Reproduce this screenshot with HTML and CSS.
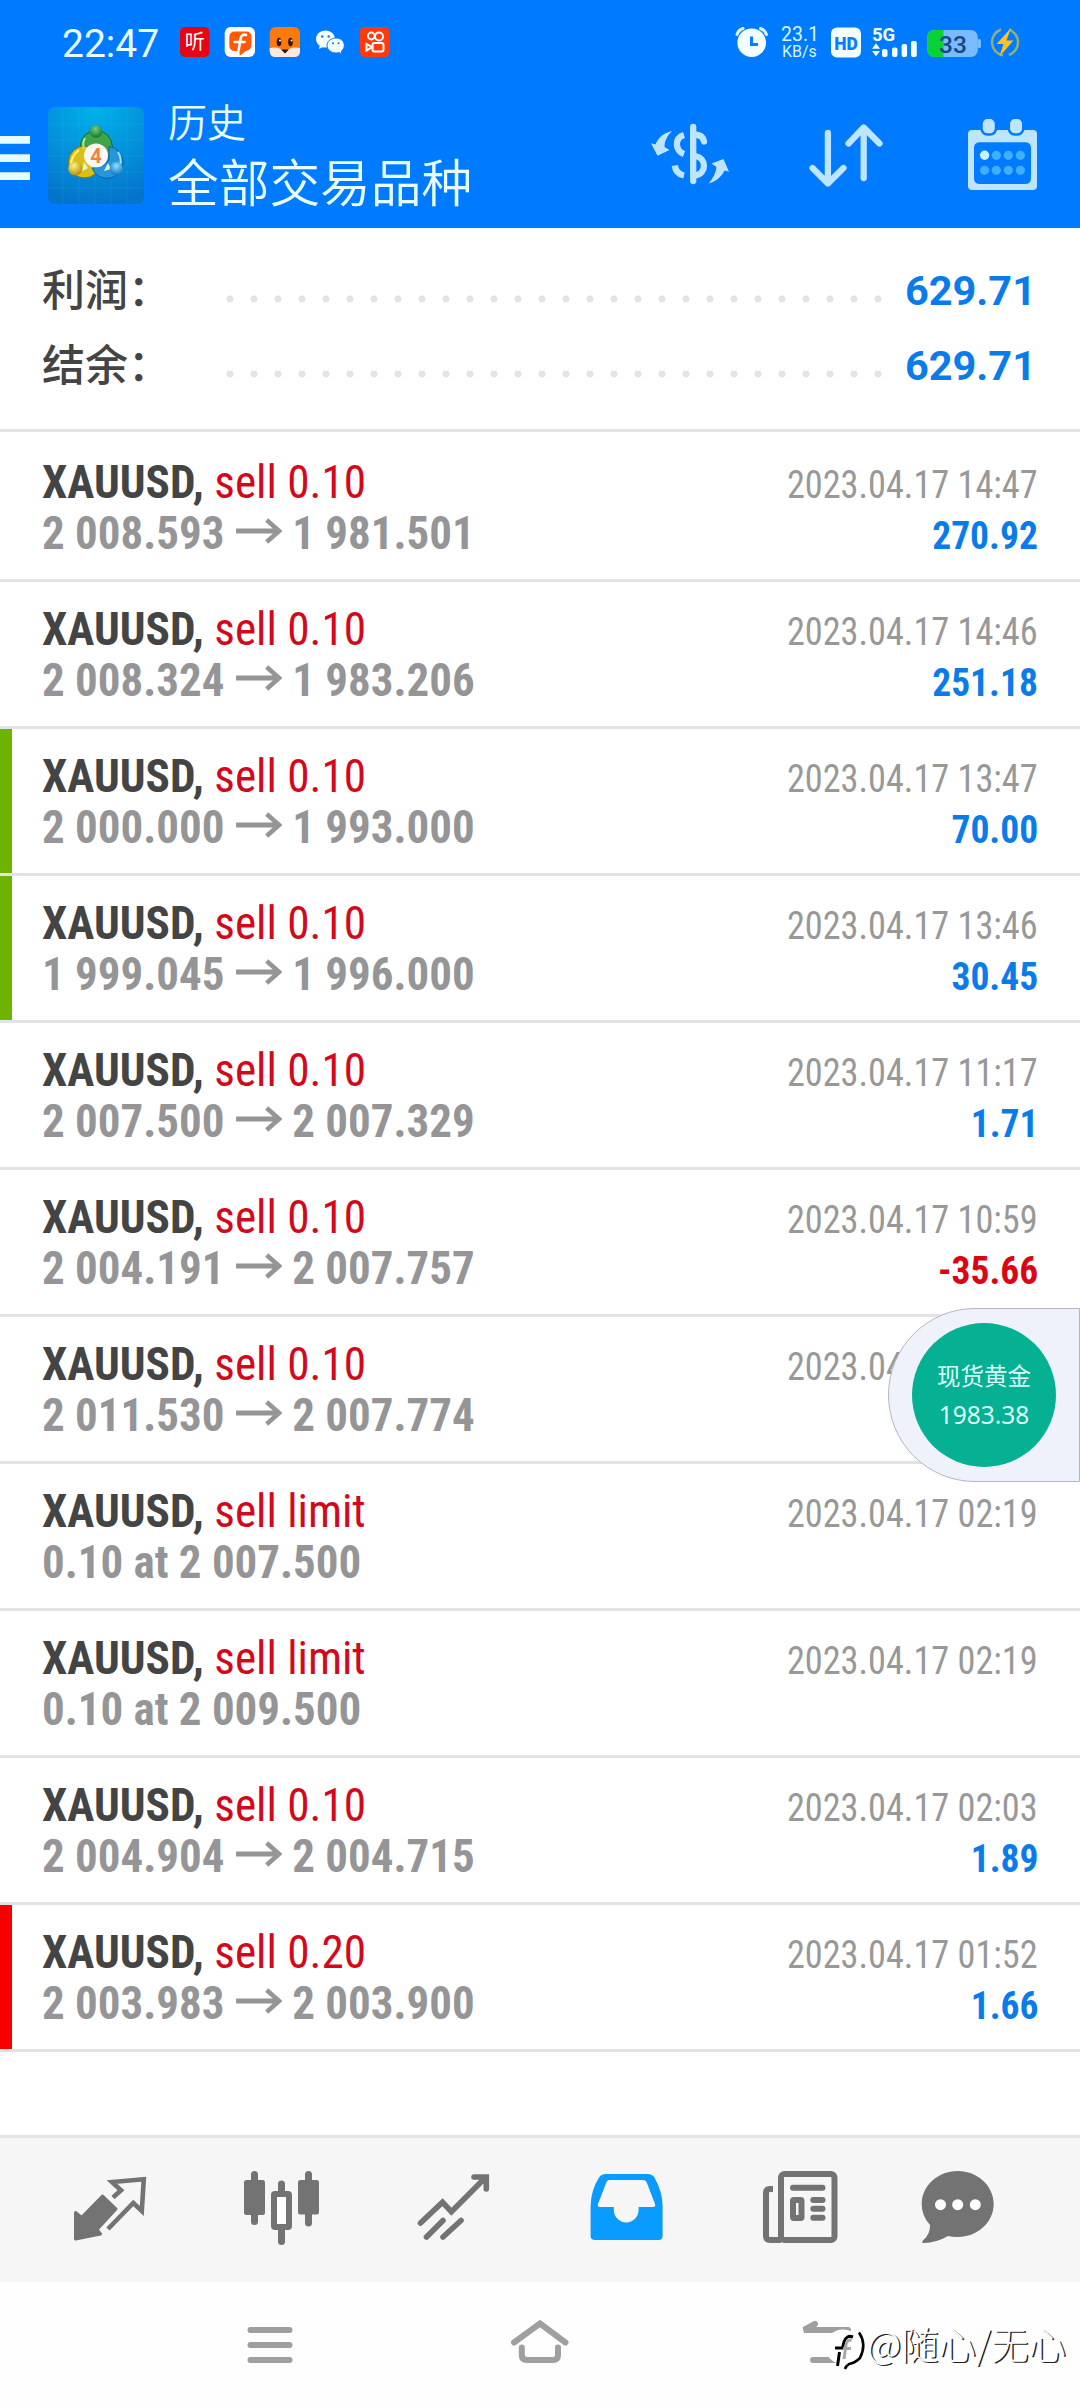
FILE: index.html
```html
<!DOCTYPE html>
<html lang="zh">
<head>
<meta charset="utf-8">
<title>历史</title>
<link rel="stylesheet" href="styles.css">
</head>
<body>
<svg width="0" height="0" class="defs"><symbol id="to" viewBox="0 0 48 26"><path d="M0 13H45M32 2L45 13L32 24" fill="none" stroke="#959597" stroke-width="4.800"/></symbol></svg>
<div class="screen">
  <header class="top">
    <div class="status">
      <span class="clock">22:47</span>
      <svg class="apps" width="230" height="84" viewBox="170 0 230 84">
        <rect x="180" y="27" width="29.5" height="30" rx="5" fill="#e60510"/>
        <text x="194.7" y="49" class="t-ting">听</text>
        <rect x="224.7" y="27" width="30.3" height="30" rx="6" fill="#fff"/>
        <path d="M235 31.500H246Q251.500 31.500 251.500 37V44Q251.500 50 246 51L240 55.500L239 51H235Q229.300 51 229.300 45V37Q229.300 31.500 235 31.500z" fill="#ff5a0a"/>
        <path d="M246 35Q241.500 33.500 240.500 39L238.500 51M234.500 42H244.500" fill="none" stroke="#fff" stroke-width="2.600" stroke-linecap="round"/>
        <rect x="269.700" y="27" width="30.300" height="30" rx="6" fill="#fa7a0c"/>
        <path d="M269.700 48Q280 46 284.800 53Q290 46 300 48V51Q300 57 294 57H275.700Q269.700 57 269.700 51z" fill="#ffe9df"/>
        <path d="M281 49.500H289L285 53.500z" fill="#2b1208"/>
        <ellipse cx="279" cy="42" rx="2.300" ry="4.300" fill="#3a1408"/><ellipse cx="290.500" cy="42" rx="2.300" ry="4.300" fill="#3a1408"/>
        <circle cx="280" cy="40.500" r="1" fill="#fff"/><circle cx="291.500" cy="40.500" r="1" fill="#fff"/>
        <path d="M325.500 30.500C320 30.500 316 34.300 316 39C316 41.800 317.400 44.200 319.700 45.700L319 49L322.500 47.200Q324 47.600 325.500 47.600C331 47.600 335 43.800 335 39S331 30.500 325.500 30.500z" fill="#f4fdff"/>
        <path d="M336 38C331 38 327 41.300 327 45.500S331 53 336 53Q337.500 53 339 52.600L341.800 54L341.200 51.300C343.100 49.800 344.300 47.800 344.300 45.500C344.300 41.300 341 38 336 38z" fill="#f4fdff" stroke="#0a7cff" stroke-width="1"/>
        <g fill="#0a7cff"><circle cx="322.200" cy="36.500" r="1.200"/><circle cx="328.700" cy="36.500" r="1.200"/><circle cx="333" cy="43.300" r="1"/><circle cx="338.500" cy="43.300" r="1"/></g>
        <rect x="359.700" y="27" width="30" height="30" rx="5" fill="#ff3a0c"/>
        <g fill="none" stroke="#fff" stroke-width="2"><circle cx="371.300" cy="36" r="3.400"/><circle cx="379" cy="36.500" r="4"/><rect x="372.500" y="43" width="11" height="8.500" rx="2"/><path d="M372 47.200L366.500 44V50.500z"/></g>
      </svg>
      <svg class="signals" width="300" height="84" viewBox="730 0 300 84">
        <circle cx="751.700" cy="42.700" r="14.300" fill="#f2ffff"/>
        <path d="M737 34.500Q738.500 30 743 28.500M766.400 34.500Q765 30 760.500 28.500" fill="none" stroke="#d6f6ff" stroke-width="3" stroke-linecap="round"/>
        <path d="M751.500 36.500V44.500H758" fill="none" stroke="#0a7cff" stroke-width="3"/>
        <text x="781" y="41" class="t-rate">23.1</text>
        <text x="782" y="57" class="t-unit">KB/s</text>
        <rect x="831" y="27.500" width="30" height="30" rx="6" fill="#f2ffff"/>
        <text x="846" y="49.500" class="t-hd">HD</text>
        <text x="872" y="41" class="t-net">5G</text>
        <path d="M876 43.300L880 48.700H872zM876 56.300L880 50.900H872z" fill="#f2ffff"/>
        <g fill="#f2ffff"><rect x="882" y="49" width="5.500" height="8" rx="2"/><rect x="892" y="47.500" width="5.500" height="9.500" rx="2"/><rect x="901.600" y="44" width="5.500" height="13" rx="2"/><rect x="911" y="41" width="5.800" height="16" rx="2"/></g>
        <rect x="927.300" y="30" width="50.500" height="27" rx="7" fill="#78bcff"/>
        <path d="M934.300 30H943.500V57H934.300Q927.300 57 927.300 50V37Q927.300 30 934.300 30z" fill="#08d236"/>
        <rect x="977.500" y="39" width="3.500" height="9" rx="1.500" fill="#78bcff"/>
        <text x="953" y="52.500" class="t-bat">33</text>
        <path d="M1001 29.500A13.500 13.500 0 0 0 1003 55.500M1009 29.500A13.500 13.500 0 0 1 1009 55" fill="none" stroke="#8fae78" stroke-width="2.600"/>
        <path d="M1011 28L996.500 44H1003.500L999.500 56.500L1013.500 40.500H1006.500z" fill="#ffc21a"/>
      </svg>
    </div>
    <div class="bar">
      <svg class="menu" width="48" height="144" viewBox="0 84 48 144"><path d="M0 136H30V143.800H0zM0 154.200H30V162H0zM0 172.300H30V180H0z" fill="#e6fbff"/></svg>
      <svg class="logo" width="96" height="97" viewBox="48 107 96 97">
        <defs>
          <radialGradient id="sky" cx=".5" cy="0" r="1"><stop offset="0" stop-color="#00b2ea"/><stop offset=".55" stop-color="#0491da"/><stop offset="1" stop-color="#0474cb"/></radialGradient>
          <radialGradient id="gr" cx=".45" cy=".3" r=".7"><stop offset="0" stop-color="#7fcb74"/><stop offset="1" stop-color="#0b7a35"/></radialGradient>
          <radialGradient id="ye" cx=".4" cy=".3" r=".7"><stop offset="0" stop-color="#fff08a"/><stop offset="1" stop-color="#b88f00"/></radialGradient>
          <radialGradient id="bl" cx=".5" cy=".3" r=".7"><stop offset="0" stop-color="#8fe0ff"/><stop offset="1" stop-color="#0b78c2"/></radialGradient>
        </defs>
        <rect x="48" y="107" width="96" height="97" rx="7" fill="url(#sky)"/>
        <path d="M63 107V204M79 107V204M95 107V204M111 107V204M127 107V204M48 124H144M48 140H144M48 156H144M48 172H144M48 188H144" stroke="#35c0f2" stroke-opacity=".16"/>
        <circle cx="96.300" cy="146.500" r="16" fill="#3fa648" stroke="#10692f"/>
        <circle cx="84.500" cy="162" r="16" fill="#dcbf14" stroke="#7d7010"/>
        <path d="M109 146.500A16 16 0 1 1 92 168Q103 168 109 160z" fill="#2596dc" stroke="#0b5fa8"/>
        <path d="M79 150Q70 157 71 167" fill="none" stroke="#fff38a" stroke-width="2"/>
        <path d="M85 138Q82 143 84 149" fill="none" stroke="#a5eba0" stroke-width="2"/>
        <path d="M118 152Q122 158 120 166" fill="none" stroke="#9be4ff" stroke-width="2"/>
        <path d="M84 162L88 168L82 171zM104 171L108 163L111 169z" fill="#dffbd0"/>
        <circle cx="96" cy="131.500" r="6.300" fill="url(#gr)"/>
        <circle cx="75.300" cy="168.500" r="7" fill="url(#ye)"/>
        <circle cx="116.300" cy="168.500" r="6.600" fill="url(#bl)"/>
        <circle cx="96" cy="155.500" r="12" fill="#fdf6f2"/>
        <text x="96" y="163" class="t-four">4</text>
      </svg>
      <div class="titles"><span class="title-small">历史</span><span class="title-big">全部交易品种</span></div>
      <svg class="actions" width="440" height="144" viewBox="640 84 440 144">
        <g fill="none" stroke="#bde5ff" stroke-width="6.300">
          <path d="M693.200 127V181" stroke-linecap="round"/>
          <path d="M684 135C674.500 138 674.500 150 684 154"/>
          <path d="M674.800 165.500C675.500 171 679 174.500 684 175.500"/>
          <path d="M695 134.500C701 135 703.500 138 704 141.500" stroke-linecap="round"/>
          <path d="M695 156C707 158 707 173.500 695 175.500"/>
          <path d="M827.900 133V182M812.500 168L827.900 183.500L843.500 168M863.700 178V128M848.500 143.500L863.700 127.500L879.500 143.500" stroke-linecap="round" stroke-linejoin="round"/>
        </g>
        <path d="M672 131C663 133 658 138 655.500 144.500L651 143.300L657.500 155.800L669.500 150L664.500 147C664.500 141 667 136 672 131zM708.700 183.500C717 181 722 176 724.500 170.500L729 171.700L723.500 159L711.500 163.500L716.500 167C716 173 713 178 708.700 183.500z" fill="#bde5ff"/>
        <path fill-rule="evenodd" d="M972 130H1033Q1037 130 1037 134V186Q1037 190 1033 190H972Q968 190 968 186V134Q968 130 972 130zM980 142.300Q974 142.300 974 148V178Q974 184 980 184H1025Q1031 184 1031 178V148Q1031 142.300 1025 142.300z" fill="#bde5ff"/>
        <g fill="#bde5ff" stroke="#007aff" stroke-width="2.500"><rect x="981.500" y="117.800" width="14.500" height="16.800" rx="6"/><rect x="1008.800" y="117.800" width="14.500" height="16.800" rx="6"/></g>
        <g fill="#3eb0ff"><circle cx="996.300" cy="155.300" r="4.600"/><circle cx="1008.300" cy="155.300" r="4.600"/><circle cx="1020.400" cy="155.300" r="4.600"/><circle cx="984.600" cy="170.300" r="4.600"/><circle cx="996.300" cy="170.300" r="4.600"/><circle cx="1008.300" cy="170.300" r="4.600"/><circle cx="1020.400" cy="170.300" r="4.600"/></g>
        <circle cx="984.600" cy="155.300" r="4.700" fill="#c8f4ff"/>
      </svg>
    </div>
  </header>

  <section class="summary">
    <div class="total"><span class="total-label">利润：</span><span class="dots"></span><span class="total-value">629.71</span></div>
    <div class="total"><span class="total-label">结余：</span><span class="dots"></span><span class="total-value">629.71</span></div>
  </section>

  <main class="deals">
    <div class="deal"><div class="line"><span class="what"><b class="sym">XAUUSD,</b> <span class="side">sell 0.10</span></span><span class="date">2023.04.17 14:47</span></div><div class="line"><span class="price">2 008.593<svg class="arrow"><use href="#to"/></svg>1 981.501</span><span class="sum">270.92</span></div></div>
    <div class="deal"><div class="line"><span class="what"><b class="sym">XAUUSD,</b> <span class="side">sell 0.10</span></span><span class="date">2023.04.17 14:46</span></div><div class="line"><span class="price">2 008.324<svg class="arrow"><use href="#to"/></svg>1 983.206</span><span class="sum">251.18</span></div></div>
    <div class="deal tp"><div class="line"><span class="what"><b class="sym">XAUUSD,</b> <span class="side">sell 0.10</span></span><span class="date">2023.04.17 13:47</span></div><div class="line"><span class="price">2 000.000<svg class="arrow"><use href="#to"/></svg>1 993.000</span><span class="sum">70.00</span></div></div>
    <div class="deal tp"><div class="line"><span class="what"><b class="sym">XAUUSD,</b> <span class="side">sell 0.10</span></span><span class="date">2023.04.17 13:46</span></div><div class="line"><span class="price">1 999.045<svg class="arrow"><use href="#to"/></svg>1 996.000</span><span class="sum">30.45</span></div></div>
    <div class="deal"><div class="line"><span class="what"><b class="sym">XAUUSD,</b> <span class="side">sell 0.10</span></span><span class="date">2023.04.17 11:17</span></div><div class="line"><span class="price">2 007.500<svg class="arrow"><use href="#to"/></svg>2 007.329</span><span class="sum">1.71</span></div></div>
    <div class="deal"><div class="line"><span class="what"><b class="sym">XAUUSD,</b> <span class="side">sell 0.10</span></span><span class="date">2023.04.17 10:59</span></div><div class="line"><span class="price">2 004.191<svg class="arrow"><use href="#to"/></svg>2 007.757</span><span class="sum loss">-35.66</span></div></div>
    <div class="deal"><div class="line"><span class="what"><b class="sym">XAUUSD,</b> <span class="side">sell 0.10</span></span><span class="date covered">2023.04</span></div><div class="line"><span class="price">2 011.530<svg class="arrow"><use href="#to"/></svg>2 007.774</span></div></div>
    <div class="deal"><div class="line"><span class="what"><b class="sym">XAUUSD,</b> <span class="side">sell limit</span></span><span class="date">2023.04.17 02:19</span></div><div class="line"><span class="price">0.10 at 2 007.500</span></div></div>
    <div class="deal"><div class="line"><span class="what"><b class="sym">XAUUSD,</b> <span class="side">sell limit</span></span><span class="date">2023.04.17 02:19</span></div><div class="line"><span class="price">0.10 at 2 009.500</span></div></div>
    <div class="deal"><div class="line"><span class="what"><b class="sym">XAUUSD,</b> <span class="side">sell 0.10</span></span><span class="date">2023.04.17 02:03</span></div><div class="line"><span class="price">2 004.904<svg class="arrow"><use href="#to"/></svg>2 004.715</span><span class="sum">1.89</span></div></div>
    <div class="deal sl"><div class="line"><span class="what"><b class="sym">XAUUSD,</b> <span class="side">sell 0.20</span></span><span class="date">2023.04.17 01:52</span></div><div class="line"><span class="price">2 003.983<svg class="arrow"><use href="#to"/></svg>2 003.900</span><span class="sum">1.66</span></div></div>
  </main>

  <nav class="tabs">
    <svg width="172" height="144" viewBox="24 2138 172 144"><path d="M102.600 2196L116 2209L97 2229.500L100.500 2234L75.500 2239V2212.500L81.500 2217.500z" fill="#737373" stroke="#737373" stroke-width="3" stroke-linejoin="round"/><path d="M113 2197.500L121 2190.200L112 2182L143.800 2179.200L141.800 2211L133.300 2203L108 2229" fill="none" stroke="#737373" stroke-width="4.600"/></svg>
    <svg width="172" height="144" viewBox="196 2138 172 144"><path d="M254.500 2174.500V2221.500M281.500 2184V2192M281.500 2228V2241.500M308.500 2174.500V2223" stroke="#737373" stroke-width="7" stroke-linecap="round"/><rect x="244" y="2180" width="21" height="35" rx="2.500" fill="#737373"/><rect x="298" y="2180" width="21" height="34.500" rx="2.500" fill="#737373"/><rect x="274" y="2194" width="15" height="33" rx="1" fill="#fff" stroke="#737373" stroke-width="6"/></svg>
    <svg width="172" height="144" viewBox="368 2138 172 144"><path d="M420.500 2223L442.500 2202.300L451.400 2211.700L485 2178M474 2177H486.300V2189M426.500 2237L443 2220.500M443 2237L461 2220.500" fill="none" stroke="#737373" stroke-width="5.600" stroke-linecap="round"/></svg>
    <svg width="172" height="144" viewBox="540 2138 172 144"><path fill-rule="evenodd" fill="#0a9bff" d="M606 2174H648Q652 2174 654.500 2177.500Q662.600 2192 662.600 2206V2236Q662.600 2240 658.500 2240H595Q590.600 2240 590.600 2236V2206Q591 2190 599 2177.500Q601 2174 606 2174zM609.500 2180Q607.500 2180 606.500 2182L598 2204Q597 2207 600 2207H613.800V2210A12.400 12.400 0 0 0 638.600 2210V2207H653Q656 2207 655 2204L646.500 2182Q645.500 2180 643 2180z"/></svg>
    <svg width="172" height="144" viewBox="712 2138 172 144"><g fill="none" stroke="#737373" stroke-width="6"><rect x="781" y="2174" width="53.500" height="66" rx="3.500"/><path d="M773 2189H770Q766 2189 766 2193V2236Q766 2240 770 2240H781"/><path d="M793 2187.700H822.500M813.300 2200H822.500M813.300 2208.800H822.500M813.300 2217.800H822.500" stroke-linecap="round"/><rect x="793" y="2200" width="8.500" height="18" rx="1"/></g></svg>
    <svg width="172" height="144" viewBox="884 2138 172 144"><path d="M957.700 2171C977.500 2171 993.700 2185.800 993.700 2204S977.500 2237 957.700 2237Q952.500 2237 948 2236Q936 2243 923.500 2243Q921 2242.500 923 2240.500Q930.500 2234 930 2225Q921.700 2216 921.700 2204C921.700 2185.800 937.900 2171 957.700 2171z" fill="#737373"/><g fill="#fff"><circle cx="940.500" cy="2204.700" r="5.500"/><circle cx="957.700" cy="2204.700" r="5.500"/><circle cx="975.300" cy="2204.700" r="5.500"/></g></svg>
  </nav>

  <footer class="sys">
    <svg width="1080" height="126" viewBox="0 2282 1080 126">
      <g fill="none" stroke="#9f9f9f" stroke-width="6" stroke-linecap="round">
        <path d="M250.500 2330H289.500M250.500 2345H289.500M250.500 2360H289.500"/>
        <path d="M514 2342.500L540 2323.500L565.500 2342.500M521.800 2347.500V2355Q521.800 2360 527 2360H553Q558 2360 558 2355V2347.500"/>
        <path d="M815 2324L804 2330H848M813 2360H843"/>
      </g>
      <circle cx="843" cy="2347" r="17.500" fill="#fff"/>
      <path d="M859 2332.500Q867 2344 860 2358Q855 2363 849 2364Q846 2366 845 2369" fill="none" stroke="#000" stroke-width="2.600"/>
      <path d="M853 2337Q846.500 2334.500 844 2342L842.500 2348H835M839.500 2352L837.500 2366" fill="none" stroke="#000" stroke-width="3"/>
      <path d="M851.500 2340.500Q847 2339 846 2345L844 2359M843 2348.500H851" fill="none" stroke="#a8a8a8" stroke-width="3"/>
      <text x="867" y="2358.500" class="t-mark">@随心/无心</text>
    </svg>
  </footer>

  <aside class="quote"><div class="quote-disc"><span class="quote-name">现货黄金</span><span class="quote-price">1983.38</span></div></aside>
</div>
</body>
</html>
```
FILE: styles.css
```css
body {
  margin: 0;
  background: #fff;
  font-family: Roboto, "Noto Sans CJK SC", sans-serif;
}
svg { display: block; flex: none; }

.screen {
  position: relative;
  display: flex;
  flex-direction: column;
  width: 1080px;
  height: 2408px;
  overflow: hidden;
}

/* Header */
.top { height: 228px; background: #007aff; color: #e8ffff; }
.status { display: flex; height: 84px; }
.clock {
  width: 108px;
  padding-left: 62px;
  line-height: 89px;
  font-size: 39px;
}
.signals { margin-left: 330px; }
.t-ting { font: 400 20px "Noto Sans CJK SC", sans-serif; fill: #fff; text-anchor: middle; }
.t-rate { font: 400 19.500px Roboto, sans-serif; fill: #d6f6ff; }
.t-unit { font: 400 16px Roboto, sans-serif; fill: #d6f6ff; }
.t-hd { font: 900 17.500px Roboto, sans-serif; fill: #0a7cff; text-anchor: middle; }
.t-net { font: 700 18.500px Roboto, sans-serif; fill: #f2ffff; }
.t-bat { font: 500 24.500px Roboto, sans-serif; fill: #17477f; text-anchor: middle; }
.t-four { font: 700 20px Roboto, sans-serif; fill: #f0813c; text-anchor: middle; }

.bar { display: flex; height: 144px; }
.logo { margin-top: 23px; }
.titles {
  display: flex;
  flex-direction: column;
  width: 472px;
  padding-left: 24px;
  font-family: "Noto Sans CJK SC", sans-serif;
  font-weight: 350;
  white-space: nowrap;
}
.title-small { margin-top: 13px; height: 47px; line-height: 46px; font-size: 39px; }
.title-big { height: 72px; line-height: 72px; font-size: 50.700px; }

/* Totals */
.summary {
  box-sizing: border-box;
  height: 204px;
  padding: 27px 44px 0 42px;
  border-bottom: 3px solid #e3e3e5;
}
.total { display: flex; height: 75px; line-height: 72px; }
.total-label { width: 176px; font: 500 43px/65px "Noto Sans CJK SC", sans-serif; color: #444; }
.dots {
  width: 672px;
  height: 24px;
  margin-top: 32px;
  background: radial-gradient(circle, #e4e4e6 3.200px, transparent 4px) 0 0 / 24px 24px;
}
.total-value { flex: 1; text-align: right; font-size: 41.500px; font-weight: 700; color: #0a7cea; }

/* Deals */
.deals { height: 1703px; }
.deal {
  box-sizing: border-box;
  height: 147px;
  padding: 21px 42px 0;
  border-bottom: 3px solid #e3e3e5;
  background-clip: padding-box;
  background-repeat: no-repeat;
  background-size: 12px 100%;
}
.deal:first-child { height: 150px; padding-top: 24px; }
.tp { background-image: linear-gradient(#6db300, #6db300); }
.sl { background-image: linear-gradient(#f60000, #f60000); }
.line {
  display: flex;
  align-items: baseline;
  justify-content: space-between;
  height: 51px;
  line-height: 51px;
  font-family: "Roboto Condensed", sans-serif;
  font-size: 47px;
  white-space: nowrap;
}
.what, .price { transform: scaleX(.962); transform-origin: left; }
.sym { color: #444; }
.side { color: #d2091a; }
.price { font-weight: 700; color: #959597; transform: scaleX(.956); }
.arrow { display: inline-block; width: 48px; height: 26px; margin: 0 11px 0 12px; vertical-align: 5px; }
.date, .sum { font-size: 39px; transform-origin: right; }
.date { color: #989898; transform: scaleX(.93); }
.covered { width: 270px; }
.sum { font-weight: 700; color: #0a7cea; transform: scaleX(.962); }
.loss { color: #dc0514; }
.defs { position: absolute; }

/* Bottom bars */
.tabs {
  display: flex;
  height: 144px;
  padding: 0 24px;
  border-top: 3px solid #e3e3e3;
  background: #f6f6f6;
}
.sys { height: 126px; background: #fefefe; }
.t-mark {
  font: 300 37.500px "Noto Sans CJK SC", sans-serif;
  fill: #fff;
  text-shadow: 1.500px 1px 0 #222;
}

/* Floating quote */
.quote {
  position: absolute;
  top: 1308px;
  right: 0;
  box-sizing: border-box;
  width: 192px;
  height: 174px;
  padding: 14px 0 0 23px;
  border: 1px solid #b3b5c4;
  border-radius: 87px 0 0 87px;
  background: #f0f2fb;
}
.quote-disc {
  display: flex;
  flex-direction: column;
  align-items: center;
  box-sizing: border-box;
  width: 144px;
  height: 144px;
  padding-top: 32px;
  border-radius: 50%;
  background: #05b192;
  color: #d9fff8;
}
.quote-name { font: 400 23.500px/40px "Noto Sans CJK SC", sans-serif; }
.quote-price { font: 400 24.500px/40px "Noto Sans", sans-serif; }
```
